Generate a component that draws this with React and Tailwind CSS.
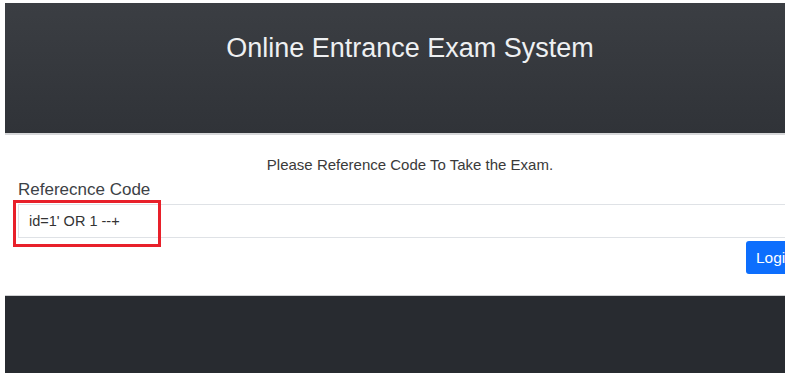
import React from "react";

export default function App() {
  const font = { fontFamily: '"Liberation Sans", Arial, sans-serif' };
  return (
    <div className="relative w-[788px] h-[375px] bg-white overflow-hidden pt-[3px] pl-[5px]" style={font}>
      <div className="w-[780px] overflow-hidden">
        <div className="w-[810px]">
          <header className="h-[130px] bg-gradient-to-b from-[#3b3e43] to-[#303338] flex justify-center pt-[30px]">
            <h1 className="text-[27px] leading-[30px] text-[#eef0f2] font-normal">Online Entrance Exam System</h1>
          </header>
          <div className="h-[2px] bg-[#d6d7d9]" />
          <main className="h-[160px] bg-white flex flex-col">
            <p className="text-center text-[15px] leading-[20px] text-[#3a3a3a] pt-[20px]">
              Please Reference Code To Take the Exam.
            </p>
            <div className="pl-[13px] pt-[3px]">
              <label className="block text-[17px] leading-[24px] text-[#3c4146]">Referecnce Code</label>
              <div className="mt-[2px] h-[34px] border border-[#dfe2e6] flex items-center pl-[10px] pt-[2px] text-[14.5px] text-[#333]">
                id=1' OR 1 --+
              </div>
              <div className="flex justify-end pr-[2px] mt-[3px]">
                <button className="w-[67px] h-[33px] bg-[#0d6efd] text-white text-[15.5px] leading-[24px] rounded-[3px] text-left pl-[10px]">Login</button>
              </div>
            </div>
          </main>
          <div className="h-[1px] bg-[#cfd0d2]" />
          <footer className="h-[77px] bg-[#282b30]" />
        </div>
      </div>
      <div className="absolute left-[13px] top-[200px] w-[148px] h-[47px] border-[3px] border-[#e8202a]" />
    </div>
  );
}
